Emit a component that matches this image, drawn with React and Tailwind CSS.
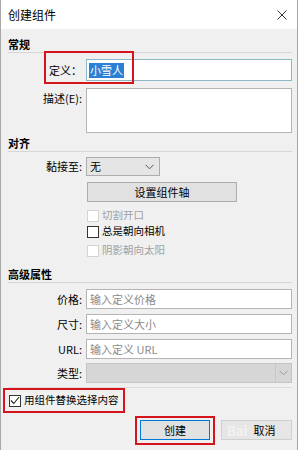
import React from "react";

const Chevron = ({ className = "" }) => (
  <svg width="9" height="6" viewBox="0 0 9 6" className={className}>
    <polyline points="0.5,0.8 4.5,4.8 8.5,0.8" fill="none" stroke="currentColor" strokeWidth="1" />
  </svg>
);

const Header = ({ children, className = "" }) => (
  <div className={className}>
    <div className="h-[16px] leading-[16px] text-[11px] font-bold text-black">{children}</div>
    <div className="h-px bg-[#d6d6d6]" />
  </div>
);

const Label = ({ children, top = false }) => (
  <div className={"w-[74px] shrink-0 text-right text-[11px] text-black " + (top ? "pt-[2px]" : "")}>{children}</div>
);

const Check = ({ label, disabled, checked }) => (
  <div className="flex items-center h-[13px]">
    <div
      className={
        "w-[12px] h-[12px] border bg-white flex items-center justify-center " +
        (disabled ? "border-[#d4d4d4]" : "border-[#333]")
      }
    >
      {checked && (
        <svg width="10" height="9" viewBox="0 0 10 9">
          <polyline points="1,4.5 3.8,7.5 9,1" fill="none" stroke="#222" strokeWidth="1.1" />
        </svg>
      )}
    </div>
    <span className={"ml-[3px] text-[10.5px] leading-none " + (disabled ? "text-[#a0a0a0]" : "text-black")}>
      {label}
    </span>
  </div>
);

const TextRow = ({ label, placeholder, className = "" }) => (
  <div className={"flex items-center h-[20px] " + className}>
    <Label>{label}</Label>
    <div className="ml-[4px] flex-1 h-full border border-[#b4b4b4] bg-white flex items-center pl-[3px] text-[11px] text-[#8a8a8a]">
      {placeholder}
    </div>
  </div>
);

export default function App() {
  return (
    <div className="w-[300px] h-[450px] bg-white font-['Noto_Sans_CJK_SC',sans-serif]">
      <div className="relative w-[298px] h-[450px] bg-[#f0f0f0] border-x border-[#a8a8a8] overflow-hidden">
        {/* title bar */}
        <div className="h-[29px] bg-white flex items-center justify-between pl-[7px] pr-[10px]">
          <span className="text-[12px] text-black">创建组件</span>
          <svg width="10" height="10" viewBox="0 0 10 10">
            <path d="M0.5 0.5 L9.5 9.5 M9.5 0.5 L0.5 9.5" stroke="#333" strokeWidth="1" />
          </svg>
        </div>

        <div className="pl-[7px] pr-[5px] flex flex-col">
          <Header className="mt-[7px]">常规</Header>

          <div className="flex items-center h-[22px] mt-[6px]">
            <Label>定义：</Label>
            <div className="ml-[4px] flex-1 h-full border border-[#8ab8c6] bg-white flex items-center pl-[2px]">
              <span className="bg-[#2b7fd4] text-white text-[11px] leading-[15px] px-[1px]">小雪人</span>
            </div>
          </div>

          <div className="flex h-[45px] mt-[7px]">
            <Label top>描述(E):</Label>
            <div className="ml-[4px] flex-1 h-full border border-[#b4b4b4] bg-white" />
          </div>

          <Header className="mt-[2px]">对齐</Header>

          <div className="flex items-center h-[19px] mt-[5px]">
            <Label>黏接至:</Label>
            <div className="ml-[4px] w-[74px] h-full border border-[#adadad] bg-[#e5e5e5] flex items-center justify-between pl-[3px] pr-[5px] text-[11px] text-black">
              <span>无</span>
              <Chevron className="text-[#555]" />
            </div>
          </div>

          <div className="flex mt-[6px]">
            <div className="w-[79px] shrink-0" />
            <button className="w-[150px] h-[20px] border border-[#adadad] bg-[#e1e1e1] text-[11px] text-black leading-none">
              设置组件轴
            </button>
          </div>

          <div className="flex flex-col pl-[79px]">
            <div className="mt-[7px]">
              <Check label="切割开口" disabled />
            </div>
            <div className="mt-[3px]">
              <Check label="总是朝向相机" />
            </div>
            <div className="mt-[6px]">
              <Check label="阴影朝向太阳" disabled />
            </div>
          </div>

          <Header className="mt-[9px]">高级属性</Header>

          <TextRow className="mt-[6px]" label="价格:" placeholder="输入定义价格" />
          <TextRow className="mt-[5px]" label="尺寸:" placeholder="输入定义大小" />
          <TextRow className="mt-[5px]" label="URL:" placeholder="输入定义 URL" />

          <div className="flex items-center h-[20px] mt-[4px]">
            <Label>类型:</Label>
            <div className="ml-[4px] flex-1 h-full border border-[#c4c4c4] bg-[#d6d6d6] flex items-center justify-end">
              <div className="h-full w-[16px] border-l border-[#c8c8c8] flex items-center justify-center">
                <Chevron className="text-[#9a9a9a]" />
              </div>
            </div>
          </div>

          <div className="h-px bg-[#dcdcdc] mt-[4px]" />

          <div className="mt-[6px] pl-[1px]">
            <Check label="用组件替换选择内容" checked />
          </div>

          <div className="flex justify-end gap-[11px] mt-[13px]">
            <button className="w-[70px] h-[20px] border border-[#0078d7] bg-[#e1e1e1] text-[11px] text-black leading-none">
              创建
            </button>
            <button className="relative w-[71px] h-[20px] border border-[#cfcfcf] bg-[#e6e6e6] text-[11px] text-black leading-none">
              <span className="pl-[16px]">取消</span>
              <span className="absolute left-[5px] top-[3px] text-[13px] font-bold text-white/50 leading-none">Bai</span>
            </button>
          </div>
        </div>

        {/* red annotation boxes */}
        <div className="absolute left-[43px] top-[51px] w-[90px] h-[33px] border-2 border-[#d6141c]" />
        <div className="absolute left-[2px] top-[388px] w-[122px] h-[25px] border-2 border-[#d6141c]" />
        <div className="absolute left-[134px] top-[416px] w-[80px] h-[29px] border-2 border-[#d6141c]" />
      </div>
    </div>
  );
}
